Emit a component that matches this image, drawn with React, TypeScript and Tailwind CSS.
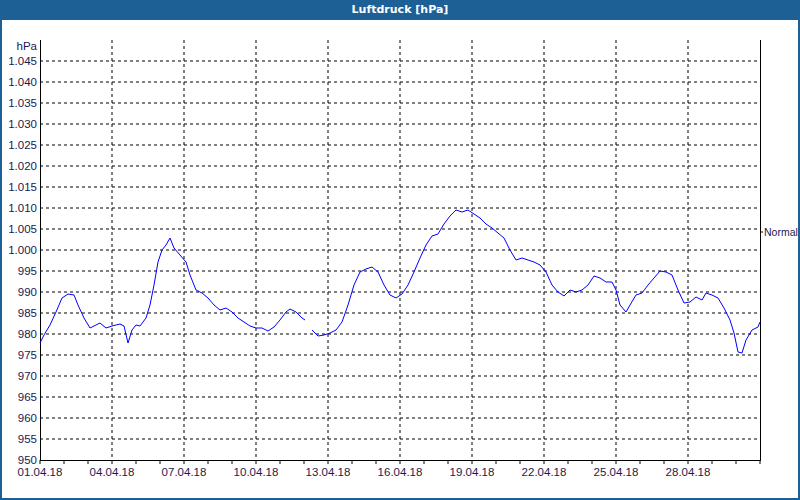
const pts: [number, number][] = [
  [40,343],[44,335],[50,325],[56,312],[62,298],[68,294],[74,295],[78,305],[84,318],[90,328],[94,326],[100,323],[106,328],[112,326],[120,324],[124,326],[128,343],[132,330],[136,325],[140,326],[146,318],[150,305],[154,285],[158,262],[162,250],[166,245],[170,238],[174,248],[180,255],[186,262],[190,275],[196,290],[202,293],[208,298],[214,305],[220,310],[226,308],[232,312],[238,318],[244,322],[250,326],[256,328],[262,328],[268,331],[274,327],[280,320],[286,312],[290,309],[296,312],[302,318],[305,320],
];
const pts2: [number, number][] = [
  [312,330],[318,336],[324,335],[330,333],[336,330],[342,322],[348,305],[354,285],[360,272],[366,269],[372,267],[378,272],[384,285],[390,295],[396,298],[402,294],[408,285],[414,272],[420,258],[426,245],[432,236],[438,234],[444,224],[450,216],[456,210],[462,212],[468,210],[474,214],[480,218],[486,224],[492,228],[498,233],[504,238],[510,250],[516,260],[522,258],[528,260],[534,262],[540,265],[546,272],[552,285],[558,292],[564,296],[570,290],[576,292],[582,290],[588,285],[594,276],[600,278],[606,282],[612,282],[616,290],[620,305],[626,312],[630,305],[636,295],[642,293],[648,285],[654,278],[660,271],[666,272],[672,275],[678,290],[684,303],[690,302],[696,297],[702,300],[706,293],[712,295],[718,298],[724,308],[730,320],[734,333],[738,352],[742,353],[746,340],[752,330],[758,327],[760,322],
];

const yLabels = Array.from({ length: 20 }, (_, i) => 950 + i * 5);
const dates = ["01.04.18","04.04.18","07.04.18","10.04.18","13.04.18","16.04.18","19.04.18","22.04.18","25.04.18","28.04.18"];

function fmt(v: number) {
  return v >= 1000 ? `1.${String(v - 1000).padStart(3, "0")}` : String(v);
}

export default function App() {
  const toStr = (p: [number, number][]) => p.map(([x, y]) => `${x},${y - 20}`).join(" ");
  return (
    <div className="w-[800px] h-[500px] flex flex-col bg-white" style={{ fontFamily: '"Liberation Sans", Arial, sans-serif' }}>
      <div className="h-[20px] bg-[#1d6096] text-white text-[11px] font-bold flex items-center justify-center" style={{ fontFamily: '"DejaVu Sans", sans-serif' }}>
        Luftdruck [hPa]
      </div>
      <div className="flex-1 border-x-2 border-b-2 border-[#1d6096]">
        <svg width="796" height="478" className="block" fontSize="11.5" fill="#1a1a50">
          <g transform="translate(-2,0)">
            {yLabels.slice(1).map((v) => {
              const y = 440 - (v - 950) * 4.2;
              return <line key={v} x1={40} x2={760} y1={y} y2={y} stroke="#000" strokeDasharray="3 3" />;
            })}
            {dates.slice(1).map((_, i) => {
              const x = 112 + i * 72;
              return <line key={i} x1={x} x2={x} y1={20} y2={440} stroke="#000" strokeDasharray="3 3" />;
            })}
            {Array.from({ length: 31 }, (_, i) => (
              <line key={i} x1={40 + i * 24} x2={40 + i * 24} y1={440} y2={444} stroke="#000" />
            ))}
            <line x1={40.5} x2={40.5} y1={20} y2={441} stroke="#000" />
            <line x1={760.5} x2={760.5} y1={20} y2={441} stroke="#000" />
            <line x1={40} x2={761} y1={440.5} y2={440.5} stroke="#000" />
            <line x1={760} x2={763} y1={212} y2={212} stroke="#000" />
            {yLabels.map((v) => (
              <text key={v} x={37} y={440 - (v - 950) * 4.2 + 4} textAnchor="end">{fmt(v)}</text>
            ))}
            <text x={37} y={30} textAnchor="end">hPa</text>
            {dates.map((d, i) => (
              <text key={d} x={40 + i * 72} y={456} textAnchor="middle">{d}</text>
            ))}
            <text x={764} y={216} fontSize="10.5">Normal</text>
            <polyline points={toStr(pts)} fill="none" stroke="#0000ff" strokeWidth={1} />
            <polyline points={toStr(pts2)} fill="none" stroke="#0000ff" strokeWidth={1} />
          </g>
        </svg>
      </div>
    </div>
  );
}
